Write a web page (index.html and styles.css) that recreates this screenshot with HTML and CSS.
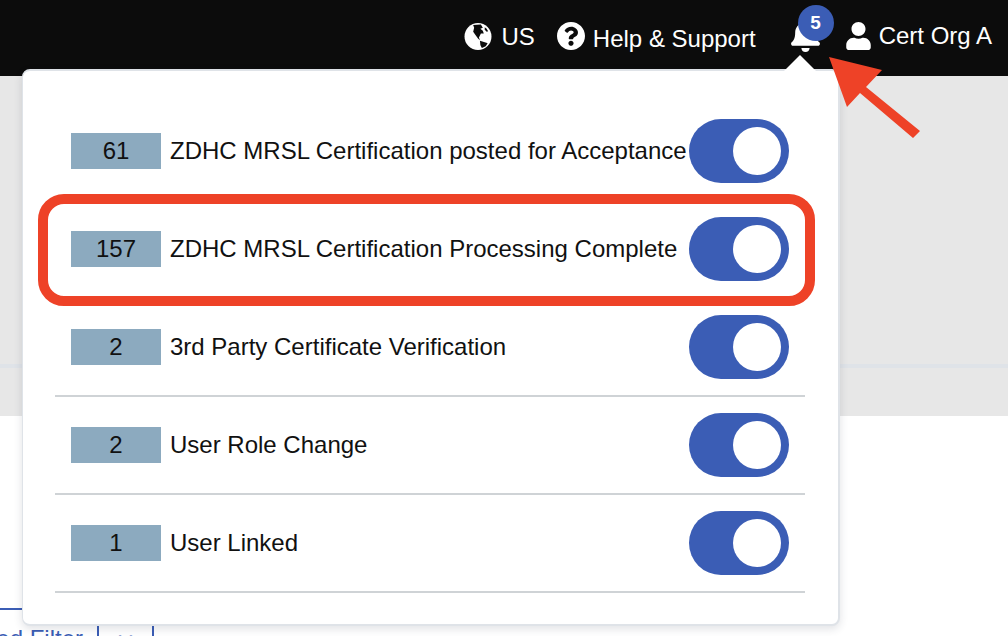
FILE: index.html
```html
<!DOCTYPE html>
<html lang="en">
<head>
<meta charset="utf-8">
<title>Notifications</title>
<link rel="stylesheet" href="styles.css">
</head>
<body>
<header class="topbar">
  <div class="nav-item nav-us">
    <svg class="icon icon-globe" viewBox="0 0 28 28"><circle cx="14" cy="14" r="14" fill="#fff"/><path fill="#0c0c0c" d="M9 2 17 1.500 19 5 16.500 6 19 8 20 11 17 11 15 15 16 18 14 16 11 12 9 9 10 5z"/><path fill="#0c0c0c" d="M16 18.500 21 20 24 21 22 24 18 26 16.500 23z"/><path fill="#0c0c0c" d="M21 4.500 23 6 24.500 8.500 23 9 21 7z"/></svg>
    <span>US</span>
  </div>
  <div class="nav-item nav-help">
    <svg class="icon icon-help" viewBox="8 8 496 496"><path fill="#fff" d="M504 256c0 136.997-111.043 248-248 248S8 392.997 8 256C8 119.083 119.043 8 256 8s248 111.083 248 248zM262.655 90c-54.497 0-89.255 22.957-116.549 63.758-3.536 5.286-2.353 12.415 2.715 16.258l34.699 26.31c5.205 3.947 12.621 3.008 16.665-2.122 17.864-22.658 30.113-35.797 57.303-35.797 20.429 0 45.698 13.148 45.698 32.958 0 14.976-12.363 22.667-32.534 33.976C247.128 238.528 216 254.941 216 296v4c0 6.627 5.373 12 12 12h56c6.627 0 12-5.373 12-12v-1.333c0-28.462 83.186-29.647 83.186-106.667 0-58.002-60.165-102-116.531-102zM256 338c-25.365 0-46 20.635-46 46 0 25.364 20.635 46 46 46s46-20.636 46-46c0-25.365-20.635-46-46-46z"/></svg>
    <span class="help-label">Help &amp; Support</span>
  </div>
  <div class="nav-bell">
    <svg class="icon icon-bell" viewBox="0 0 448 512"><path fill="#fff" d="M224 512c35.32 0 63.97-28.65 63.97-64H160.03c0 35.35 28.65 64 63.97 64zm215.39-149.71c-19.32-20.76-55.47-51.99-55.47-154.29 0-77.7-54.48-139.9-127.94-155.16V32c0-17.67-14.32-32-31.98-32s-31.98 14.33-31.98 32v20.84C118.56 68.1 64.08 130.3 64.08 208c0 102.3-36.15 133.53-55.47 154.29-6 6.45-8.66 14.16-8.61 21.71.11 16.4 12.98 32 32.1 32h383.8c19.12 0 32-15.6 32.1-32 .05-7.55-2.61-15.27-8.61-21.71z"/></svg>
    <span class="bell-badge">5</span>
  </div>
  <div class="nav-item nav-user">
    <svg class="icon icon-user" viewBox="0 0 448 512"><path fill="#fff" d="M224 256c70.7 0 128-57.3 128-128S294.700 0 224 0 96 57.300 96 128s57.300 128 128 128zm89.600 32h-16.700c-22.200 10.200-46.900 16-72.900 16s-50.600-5.800-72.900-16h-16.700C60.200 288 0 348.200 0 422.400V464c0 26.500 21.500 48 48 48h352c26.500 0 48-21.500 48-48v-41.600c0-74.200-60.200-134.400-134.400-134.400z"/></svg>
    <span>Cert Org A</span>
  </div>
</header>

<section class="band"></section>

<main class="content">
  <div class="filter-group">
    <span class="filter-cell filter-main">Advanced Filter</span>
    <span class="filter-cell filter-more">&lsaquo; &rsaquo;</span>
  </div>
</main>

<div class="dropdown">
  <span class="caret"></span>
  <div class="note-row">
    <span class="count">61</span>
    <span class="note-label">ZDHC MRSL Certification posted for Acceptance</span>
    <span class="toggle"><span class="knob"></span></span>
  </div>
  <div class="note-row">
    <span class="count">157</span>
    <span class="note-label">ZDHC MRSL Certification Processing Complete</span>
    <span class="toggle"><span class="knob"></span></span>
  </div>
  <div class="note-row">
    <span class="count">2</span>
    <span class="note-label">3rd Party Certificate Verification</span>
    <span class="toggle"><span class="knob"></span></span>
  </div>
  <div class="note-row">
    <span class="count">2</span>
    <span class="note-label">User Role Change</span>
    <span class="toggle"><span class="knob"></span></span>
  </div>
  <div class="note-row">
    <span class="count">1</span>
    <span class="note-label">User Linked</span>
    <span class="toggle"><span class="knob"></span></span>
  </div>
  <div class="highlight"></div>
</div>

<svg class="arrow" viewBox="0 0 110 95"><polygon fill="#ee4227" points="9,2 62,15 46,32 100,76 93,83 40,38 27,52"/></svg>
</body>
</html>
```
FILE: styles.css
```css
* {
  box-sizing: border-box;
}

html,
body {
  margin: 0;
  height: 636px;
  overflow: hidden;
  background: #fff;
  font-family: "Liberation Sans", Arial, sans-serif;
  color: #111;
}

body {
  position: relative;
}

.topbar {
  height: 76px;
  background: #0c0c0c;
  color: #fff;
  display: flex;
  justify-content: flex-end;
  font-size: 24px;
  padding-right: 16px;
}

.nav-item {
  display: flex;
  align-items: flex-start;
}

.icon {
  display: block;
  flex: none;
}

.nav-us {
  padding-top: 23px;
  gap: 10px;
  margin-right: 22px;
  line-height: 27px;
}

.icon-globe {
  width: 28px;
  height: 27px;
}

.nav-help {
  padding-top: 22px;
  gap: 8px;
  line-height: 34px;
}

.icon-help {
  width: 28px;
  height: 28px;
}

.help-label {
  display: block;
}

.nav-bell {
  position: relative;
  width: 44px;
  margin-left: 35px;
  margin-right: 11px;
  height: 76px;
}

.icon-bell {
  position: absolute;
  left: 0;
  top: 19px;
  width: 29px;
  height: 33px;
}

.bell-badge {
  position: absolute;
  left: 7px;
  top: 5px;
  width: 36px;
  height: 36px;
  border-radius: 50%;
  background: #3b5db5;
  color: #fff;
  font-size: 19px;
  font-weight: 700;
  line-height: 36px;
  text-align: center;
}

.nav-user {
  padding-top: 22px;
  gap: 8px;
  line-height: 28px;
}

.icon-user {
  width: 25px;
  height: 28px;
}

.band {
  height: 340px;
  background: #e7e7e7;
  padding-top: 288px;
}

.band::before {
  content: "";
  display: block;
  height: 4px;
  background: #dfe3e8;
}

.content {
  height: 220px;
  padding-top: 192px;
  overflow: hidden;
}

.filter-group {
  display: flex;
  width: 255px;
  height: 60px;
  margin-left: -101px;
  border-top: 2px solid #3b5db5;
  color: #3b5db5;
  font-size: 24px;
}

.filter-cell {
  display: block;
  white-space: nowrap;
  padding-top: 15px;
}

.filter-main {
  width: 200px;
  border-right: 2px solid #3b5db5;
  padding-right: 14px;
  text-align: right;
}

.filter-more {
  width: 55px;
  border-right: 2px solid #3b5db5;
  text-align: center;
}

.dropdown {
  position: absolute;
  left: 22px;
  top: 69px;
  width: 818px;
  height: 557px;
  padding: 32px 33px 0 32px;
  background: #fff;
  border: 2px solid #dfe3e8;
  border-left-width: 1px;
  border-radius: 8px;
  box-shadow: 0 3px 8px rgba(40, 50, 70, 0.14);
}

.caret {
  position: absolute;
  left: 761px;
  top: -16px;
  width: 0;
  height: 0;
  border-left: 16px solid transparent;
  border-right: 16px solid transparent;
  border-bottom: 16px solid #fff;
}

.note-row {
  display: flex;
  align-items: center;
  height: 98px;
  padding: 0 16px;
  border-bottom: 2px solid #cfd3d6;
  position: relative;
}

.count {
  flex: none;
  width: 90px;
  height: 36px;
  background: #8caabf;
  font-size: 24px;
  line-height: 36px;
  text-align: center;
  color: #111;
}

.note-label {
  flex: 1;
  margin-left: 9px;
  font-size: 24px;
  white-space: nowrap;
}

.toggle {
  flex: none;
  display: block;
  position: relative;
  width: 100px;
  height: 64px;
  border-radius: 32px;
  background: #3b5db5;
}

.knob {
  position: absolute;
  left: 44px;
  top: 8px;
  width: 48px;
  height: 48px;
  border-radius: 50%;
  background: #fff;
}

.highlight {
  position: absolute;
  left: 15px;
  top: 123px;
  width: 777px;
  height: 112px;
  border: 10px solid #ee4227;
  border-radius: 26px;
}

.arrow {
  position: absolute;
  left: 820px;
  top: 55px;
  width: 110px;
  height: 95px;
}
```
